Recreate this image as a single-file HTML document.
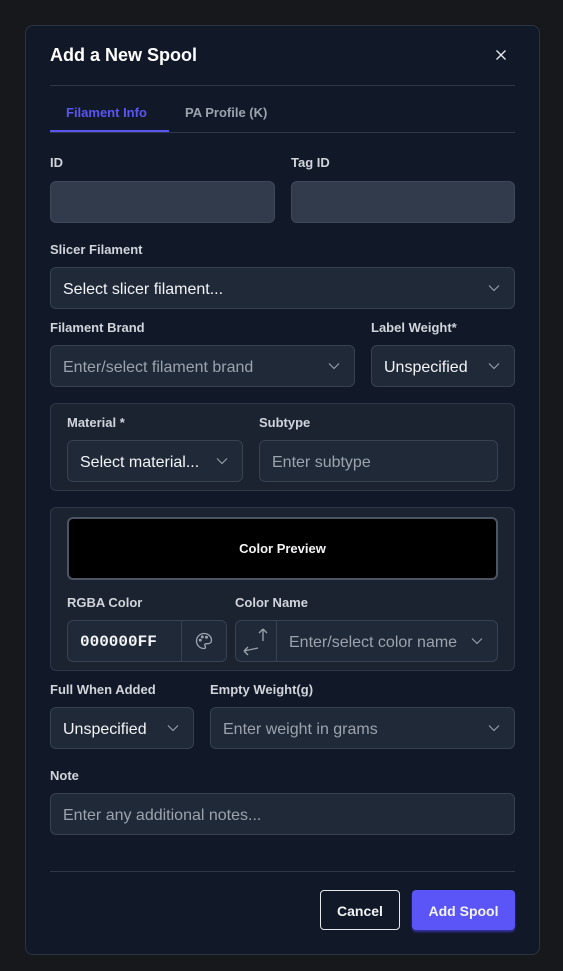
<!DOCTYPE html>
<html><head><style>
*{box-sizing:border-box;margin:0;padding:0}
body{width:563px;height:971px;background:#17181b;font-family:"Liberation Sans",sans-serif;position:relative;overflow:hidden;color:#e5e7eb}
.a{position:absolute}
.modal{left:25px;top:25px;width:515px;height:930px;background:#111827;border:1px solid #2b3342;border-radius:8px}
.lbl{font-size:13px;font-weight:bold;color:#d1d5db}
.in{background:#1f2937;border:1px solid #374151;border-radius:6px;height:42px;font-size:16px;color:#9ca3af;padding-left:12px;line-height:43px;white-space:nowrap;overflow:hidden}
.w{color:#f3f4f6}
.chev{position:absolute;right:14px;top:16px;width:12px;height:8px}
.panel{background:#1b2230;border:1px solid #2f3846;border-radius:6px}
</style></head><body>
<div class="a modal"></div>
<div class="a" style="left:50px;top:45px;font-size:18px;font-weight:bold;color:#fff">Add a New Spool</div>
<svg class="a" style="left:495px;top:49px" width="12" height="12" viewBox="0 0 12 12"><path d="M1.5 1.5L10.5 10.5M10.5 1.5L1.5 10.5" stroke="#e5e7eb" stroke-width="1.4"/></svg>
<div class="a" style="left:50px;top:85px;width:465px;height:1px;background:#2f3846"></div>
<div class="a" style="left:66px;top:105px;font-size:13px;font-weight:bold;color:#5b55f0">Filament Info</div>
<div class="a" style="left:185px;top:105px;font-size:13px;font-weight:bold;color:#9ca3af">PA Profile (K)</div>
<div class="a" style="left:50px;top:132px;width:465px;height:1px;background:#2f3846"></div>
<div class="a" style="left:50px;top:130px;width:119px;height:2px;background:#5b55f0"></div>

<div class="a lbl" style="left:50px;top:155px">ID</div>
<div class="a lbl" style="left:291px;top:155px">Tag ID</div>
<div class="a in" style="left:50px;top:181px;width:225px;background:#323b4b;border-color:#3f4858"></div>
<div class="a in" style="left:291px;top:181px;width:224px;background:#323b4b;border-color:#3f4858"></div>

<div class="a lbl" style="left:50px;top:242px">Slicer Filament</div>
<div class="a in w" style="left:50px;top:267px;width:465px">Select slicer filament...<svg class="chev" viewBox="0 0 12 8"><path d="M1 1.5L6 6.5L11 1.5" stroke="#9ca3af" fill="none" stroke-width="1.1"/></svg></div>

<div class="a lbl" style="left:50px;top:320px">Filament Brand</div>
<div class="a lbl" style="left:371px;top:320px">Label Weight*</div>
<div class="a in" style="left:50px;top:345px;width:305px">Enter/select filament brand<svg class="chev" viewBox="0 0 12 8"><path d="M1 1.5L6 6.5L11 1.5" stroke="#9ca3af" fill="none" stroke-width="1.1"/></svg></div>
<div class="a in w" style="left:371px;top:345px;width:144px">Unspecified<svg class="chev" viewBox="0 0 12 8"><path d="M1 1.5L6 6.5L11 1.5" stroke="#9ca3af" fill="none" stroke-width="1.1"/></svg></div>

<div class="a panel" style="left:50px;top:403px;width:465px;height:88px"></div>
<div class="a lbl" style="left:67px;top:415px">Material *</div>
<div class="a lbl" style="left:259px;top:415px">Subtype</div>
<div class="a in w" style="left:67px;top:440px;width:176px">Select material...<svg class="chev" viewBox="0 0 12 8"><path d="M1 1.5L6 6.5L11 1.5" stroke="#9ca3af" fill="none" stroke-width="1.1"/></svg></div>
<div class="a in" style="left:259px;top:440px;width:239px">Enter subtype</div>

<div class="a panel" style="left:50px;top:507px;width:465px;height:164px"></div>
<div class="a" style="left:67px;top:517px;width:431px;height:63px;background:#000;border:2px solid #4b5563;border-radius:6px;color:#f3f4f6;font-size:13px;font-weight:bold;text-align:center;line-height:60px">Color Preview</div>
<div class="a lbl" style="left:67px;top:595px">RGBA Color</div>
<div class="a lbl" style="left:235px;top:595px">Color Name</div>
<div class="a in w" style="left:67px;top:620px;width:160px;font-family:'Liberation Mono',monospace;font-weight:bold;font-size:16px">000000FF</div>
<div class="a" style="left:181px;top:621px;width:1px;height:40px;background:#374151"></div>
<svg class="a" style="left:194px;top:631px" width="20" height="20" viewBox="0 0 24 24" fill="none" stroke="#9ca3af" stroke-width="1.6"><path d="M12 3a9 9 0 0 0 0 18c1.2 0 1.8-.8 1.8-1.7 0-.5-.2-.9-.5-1.2-.3-.3-.5-.7-.5-1.2 0-.9.8-1.7 1.7-1.7H17a4 4 0 0 0 4-4C21 6.6 17 3 12 3z"/><circle cx="7.5" cy="11" r="1"/><circle cx="10" cy="7" r="1"/><circle cx="15" cy="7.5" r="1"/></svg>
<div class="a in" style="left:235px;top:620px;width:263px;padding-left:53px">Enter/select color name<svg class="chev" viewBox="0 0 12 8"><path d="M1 1.5L6 6.5L11 1.5" stroke="#9ca3af" fill="none" stroke-width="1.1"/></svg></div>
<div class="a" style="left:276px;top:621px;width:1px;height:40px;background:#374151"></div>
<svg class="a" style="left:241px;top:627px" width="30" height="30" viewBox="0 0 30 30" fill="none" stroke="#9ca3af" stroke-width="1.3"><path d="M17 21L3 24M3 24L7 20M3 24L7 28" /><path d="M22 2V14M22 2L18 6M22 2L26 6"/></svg>

<div class="a lbl" style="left:50px;top:682px">Full When Added</div>
<div class="a lbl" style="left:210px;top:682px">Empty Weight(g)</div>
<div class="a in w" style="left:50px;top:707px;width:144px">Unspecified<svg class="chev" viewBox="0 0 12 8"><path d="M1 1.5L6 6.5L11 1.5" stroke="#9ca3af" fill="none" stroke-width="1.1"/></svg></div>
<div class="a in" style="left:210px;top:707px;width:305px">Enter weight in grams<svg class="chev" viewBox="0 0 12 8"><path d="M1 1.5L6 6.5L11 1.5" stroke="#9ca3af" fill="none" stroke-width="1.1"/></svg></div>

<div class="a lbl" style="left:50px;top:768px">Note</div>
<div class="a in" style="left:50px;top:793px;width:465px">Enter any additional notes...</div>

<div class="a" style="left:50px;top:871px;width:465px;height:1px;background:#2f3846"></div>
<div class="a" style="left:320px;top:890px;width:80px;height:40px;border:1px solid #e5e7eb;border-radius:4px;font-size:14px;font-weight:bold;color:#f3f4f6;text-align:center;line-height:40px">Cancel</div>
<div class="a" style="left:412px;top:890px;width:103px;height:40px;background:#5b55f7;border-radius:4px;font-size:14px;font-weight:bold;color:#f3f4f6;text-align:center;line-height:42px;box-shadow:0 2px 2px #3730a3">Add Spool</div>
</body></html>
